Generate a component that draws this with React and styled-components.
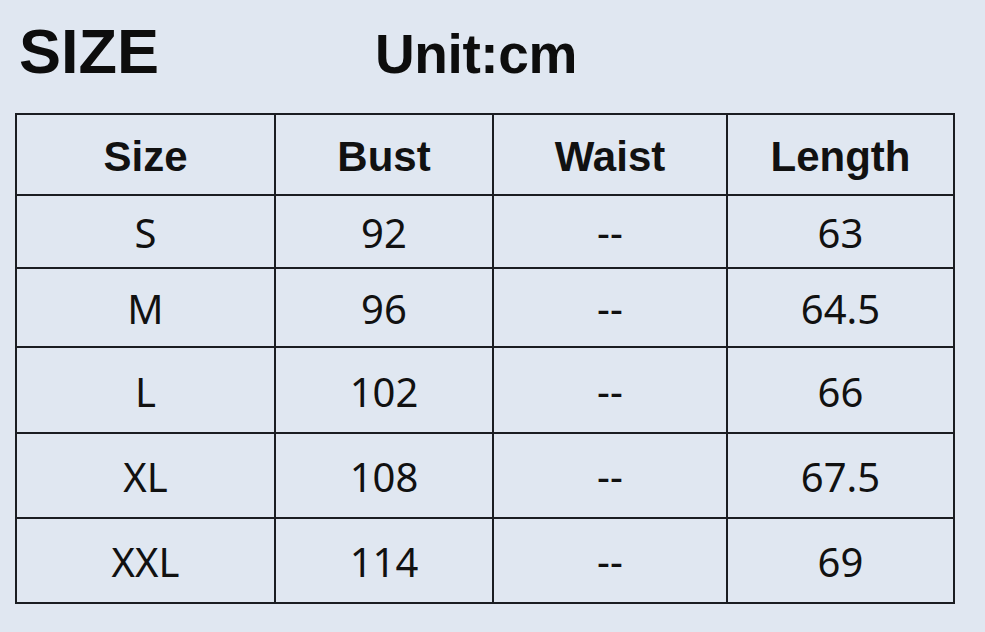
import React from "react";
import styled, { createGlobalStyle } from "styled-components";

const Global = createGlobalStyle`
  html, body {
    margin: 0;
    padding: 0;
    background: #e0e7f1;
  }
  body {
    width: 985px;
    height: 632px;
    overflow: hidden;
    font-family: "Liberation Sans", Arial, sans-serif;
    color: #111;
  }
`;

const Page = styled.div`
  width: 985px;
  height: 632px;
  background: #e0e7f1;
  box-sizing: border-box;
  padding: 20px 0 0 15px;
`;

const TitleBar = styled.div`
  display: flex;
  align-items: baseline;
  padding-left: 4px;
  height: 62px;
`;

const Title = styled.div`
  font-family: "Liberation Sans", Arial, sans-serif;
  font-weight: 700;
  font-size: 63px;
  line-height: 1;
  letter-spacing: 0px;
  color: #0d0d0d;
  width: 356px;
`;

const Unit = styled.div`
  font-family: "Liberation Sans", Arial, sans-serif;
  font-weight: 700;
  font-size: 55px;
  line-height: 1;
  letter-spacing: -0.4px;
  color: #0d0d0d;
`;

const Grid = styled.div`
  margin-top: 31px;
  display: grid;
  grid-template-columns: 259px 218px 234px 227px;
  grid-template-rows: ${(p) => p.$rows};
  width: max-content;
  border-top: 2px solid #1b1d22;
  border-left: 2px solid #1b1d22;
`;

const Cell = styled.div`
  border-right: 2px solid #1b1d22;
  border-bottom: 2px solid #1b1d22;
  display: flex;
  align-items: center;
  justify-content: center;
  box-sizing: border-box;
  color: #111;
`;

const HeadCell = styled(Cell)`
  font-family: "Liberation Sans", Arial, sans-serif;
  font-weight: 700;
  font-size: 42px;
  padding-top: 5px;
`;

const BodyCell = styled(Cell)`
  font-family: "Noto Sans", "Open Sans", sans-serif;
  font-weight: 400;
  font-size: 40px;
  padding-top: ${(p) => (p.$dash ? "0px" : "2px")};
`;

const headers = ["Size", "Bust", "Waist", "Length"];
const rows = [
  ["S", "92", "--", "63"],
  ["M", "96", "--", "64.5"],
  ["L", "102", "--", "66"],
  ["XL", "108", "--", "67.5"],
  ["XXL", "114", "--", "69"],
];

export default function App() {
  return (
    <Page>
      <Global />
      <TitleBar>
        <Title>SIZE</Title>
        <Unit>Unit:cm</Unit>
      </TitleBar>
      <Grid $rows="81px 73px 79px 86px 85px 85px">
        {headers.map((h) => (
          <HeadCell key={h}>{h}</HeadCell>
        ))}
        {rows.map((r) =>
          r.map((v, i) => (
            <BodyCell key={r[0] + i} $dash={v === "--"}>
              {v}
            </BodyCell>
          ))
        )}
      </Grid>
    </Page>
  );
}
